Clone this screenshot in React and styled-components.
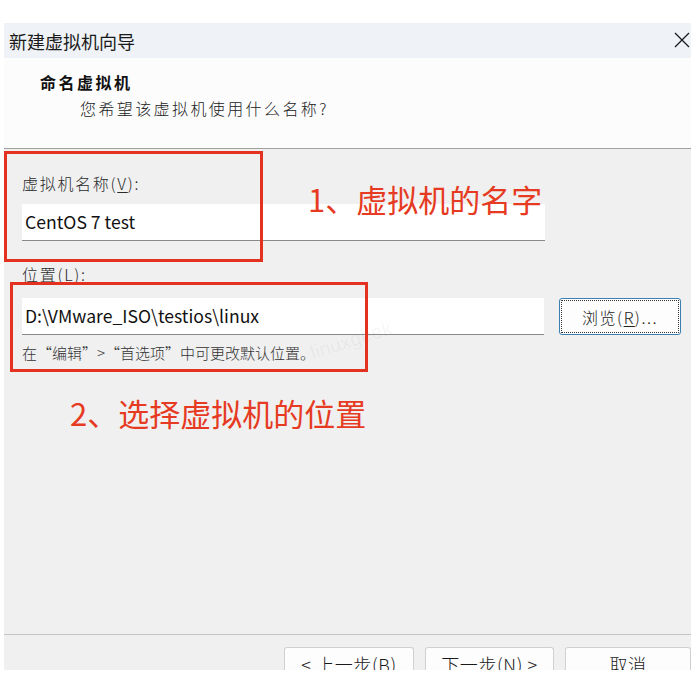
import styled, { createGlobalStyle } from "styled-components";

const GlobalStyle = createGlobalStyle`
  html, body {
    margin: 0;
    padding: 0;
    background: #ffffff;
  }
  body {
    font-family: "Noto Sans CJK SC", "Noto Sans", sans-serif;
    color: #1b1b1b;
  }
`;

const Dialog = styled.div`
  margin: 23px 0 0 4px;
  width: 687px;
  height: 647px;
  display: flex;
  flex-direction: column;
  overflow: hidden;
  background: #f0f0f0;
`;

const TitleBar = styled.div`
  height: 35px;
  flex: none;
  display: flex;
  align-items: center;
  justify-content: space-between;
  padding: 0 0 0 5px;
  background: #eff2f6;
  font-size: 18px;
  color: #1a1a1a;
`;

const CloseIcon = styled.svg`
  width: 16px;
  height: 16px;
  margin: 0 1px 2px 0;
`;

const Header = styled.div`
  height: 91px;
  flex: none;
  background: #fcfcfc;
  border-bottom: 1px solid #a0a0a0;
  padding: 13px 0 0 36px;
  box-sizing: border-box;
`;

const HeaderTitle = styled.div`
  font-size: 16px;
  font-weight: 700;
  line-height: 22px;
  letter-spacing: 2.5px;
  color: #111;
`;

const HeaderSub = styled.div`
  font-size: 16px;
  line-height: 22px;
  letter-spacing: 2.4px;
  margin: 4px 0 0 40px;
  color: #222;
  font-weight: 300;
`;

const Body = styled.div`
  position: relative;
  flex: 1;
  padding: 23px 0 0 18px;
  box-sizing: border-box;
  display: flex;
  flex-direction: column;
`;

const Label = styled.div`
  font-size: 16px;
  line-height: 22px;
  letter-spacing: 1.7px;
  color: #2a2a2a;
  font-weight: 300;
  margin-top: ${(p) => p.$top || 0}px;
`;

const Key = styled.span`
  text-decoration: underline;
  text-underline-offset: 2px;
`;

const Row = styled.div`
  display: flex;
  align-items: flex-start;
  gap: 15px;
  margin-top: ${(p) => p.$top || 0}px;
`;

const Field = styled.div`
  width: ${(p) => p.$w}px;
  height: 37px;
  box-sizing: border-box;
  background: #ffffff;
  border-bottom: 1px solid #8a8a8a;
  display: flex;
  align-items: center;
  padding: 0 0 2px 3px;
  font-size: 17.6px;
  color: #111;
  margin-top: ${(p) => p.$top || 0}px;
`;

const Browse = styled.div`
  width: 122px;
  height: 37px;
  box-sizing: border-box;
  background: #fdfdfd;
  border: 1px solid #3c7fb1;
  border-radius: 3px;
  outline: 1px dotted #333;
  outline-offset: -3px;
  display: flex;
  align-items: center;
  justify-content: center;
  font-size: 16px;
  letter-spacing: 1.5px;
  color: #222;
  font-weight: 300;
`;

const Hint = styled.div`
  font-size: 15px;
  line-height: 22px;
  margin-top: 7px;
  color: #333;
  font-weight: 300;
`;

const RedBox = styled.div`
  position: absolute;
  left: ${(p) => p.$x}px;
  top: ${(p) => p.$y}px;
  width: ${(p) => p.$w}px;
  height: ${(p) => p.$h}px;
  border: 3px solid #e3321f;
  box-sizing: border-box;
  pointer-events: none;
`;

const Note = styled.div`
  position: absolute;
  left: ${(p) => p.$x}px;
  top: ${(p) => p.$y}px;
  font-size: 31px;
  line-height: 34px;
  color: #e63a22;
  white-space: nowrap;
`;

const Watermark = styled.div`
  position: absolute;
  left: 305px;
  top: 180px;
  transform: rotate(-18deg);
  font-family: "Liberation Sans", sans-serif;
  font-size: 20px;
  color: rgba(0, 0, 0, 0.05);
`;

const Footer = styled.div`
  height: 36px;
  flex: none;
  border-top: 1px solid #c4c4c4;
  display: flex;
  justify-content: flex-end;
  gap: 11px;
  padding-top: 12px;
  box-sizing: border-box;
`;

const Button = styled.div`
  width: ${(p) => p.$w}px;
  height: 34px;
  flex: none;
  box-sizing: border-box;
  background: #fdfdfd;
  border: 1px solid #d0d0d0;
  border-bottom: none;
  border-radius: 3px 3px 0 0;
  display: flex;
  justify-content: center;
  padding-top: 3px;
  font-size: 18px;
  letter-spacing: 0.6px;
  color: #1a1a1a;
  font-weight: 300;
  white-space: pre;
`;

export default function App() {
  return (
    <>
      <GlobalStyle />
      <Dialog>
        <TitleBar>
          <span>新建虚拟机向导</span>
          <CloseIcon viewBox="0 0 16 16">
            <path d="M1 1 L15 15 M15 1 L1 15" stroke="#1a1a1a" strokeWidth="1.3" fill="none" />
          </CloseIcon>
        </TitleBar>
        <Header>
          <HeaderTitle>命名虚拟机</HeaderTitle>
          <HeaderSub>您希望该虚拟机使用什么名称?</HeaderSub>
        </Header>
        <Body>
          <Label>
            虚拟机名称(<Key>V</Key>):
          </Label>
          <Field $w={523} $top={10}>CentOS 7 test</Field>
          <Label $top={22}>
            位置(<Key>L</Key>):
          </Label>
          <Row $top={13}>
            <Field $w={522}>D:\VMware_ISO\testios\linux</Field>
            <Browse>
              浏览(<Key>R</Key>)...
            </Browse>
          </Row>
          <Hint>在“编辑”&gt;“首选项”中可更改默认位置。</Hint>

          <Watermark>linuxgeek</Watermark>
          <RedBox $x={0} $y={2} $w={259} $h={111} />
          <RedBox $x={6} $y={133} $w={358} $h={90} />
          <Note $x={304} $y={33}>1、虚拟机的名字</Note>
          <Note $x={66} $y={247}>2、选择虚拟机的位置</Note>
        </Body>
        <Footer>
          <Button $w={130}>&lt; 上一步(B)</Button>
          <Button $w={129}>下一步(N) &gt;</Button>
          <Button $w={126}>取消</Button>
        </Footer>
      </Dialog>
    </>
  );
}
